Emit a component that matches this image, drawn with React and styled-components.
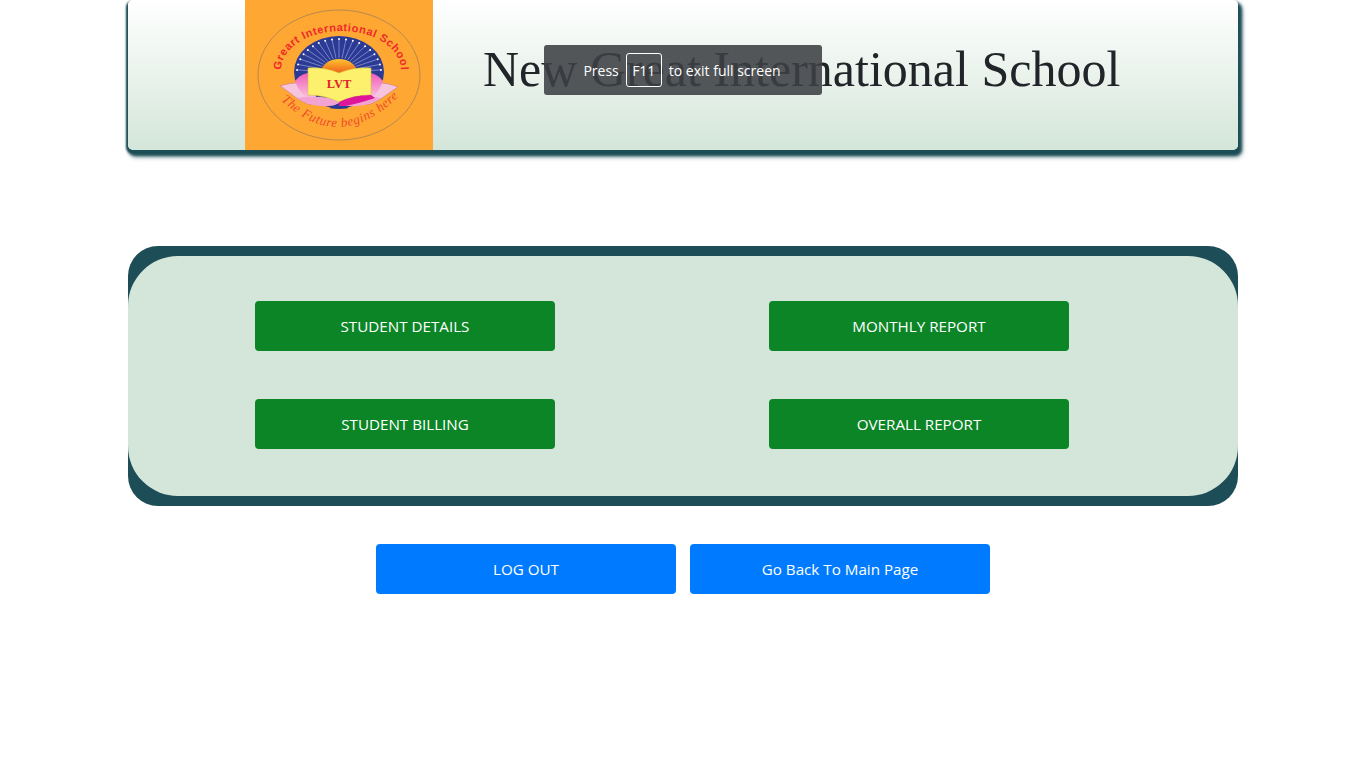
import React from "react";
import styled, { createGlobalStyle } from "styled-components";

const Global = createGlobalStyle`
  html, body { margin: 0; padding: 0; background: #fff; }
  body { font-family: "Open Sans", "Noto Sans", sans-serif; }
`;
const Page = styled.div`
  position: relative;
  width: 1366px;
  height: 768px;
  overflow: hidden;
`;
const Container = styled.div`
  width: 1110px;
  margin: 0 auto;
  display: flex;
  flex-direction: column;
`;
const Header = styled.header`
  display: flex;
  align-items: flex-start;
  height: 150px;
  padding-left: 117px;
  border-radius: 5px;
  background: linear-gradient(to bottom, #ffffff 0%, #d4e6d9 100%);
  box-shadow: 2px 4px 3px 2px #1d4d56, -1px 2px 2px 1px #1d4d56, 3px 6px 5px 1px rgba(29, 77, 86, 0.5);
`;
const Logo = styled.svg`
  flex: none;
  display: block;
  width: 188px;
  height: 150px;
`;
const Title = styled.h1`
  margin: 38px 0 0 50px;
  font-family: "Liberation Serif", "Times New Roman", serif;
  font-size: 50px;
  line-height: 62px;
  font-weight: 400;
  color: #212529;
  white-space: nowrap;
`;
const Panel = styled.section`
  margin-top: 96px;
  padding: 10px 0;
  background: #1d4d56;
  border-radius: 30px;
`;
const PanelInner = styled.div`
  display: grid;
  grid-template-columns: 300px 300px;
  column-gap: 214px;
  row-gap: 48px;
  padding: 45px 0 47px 127px;
  background: #d4e6d9;
  border-radius: 50px;
`;
const Button = styled.button`
  width: 300px;
  height: 50px;
  padding: 0;
  border: 0;
  border-radius: 4px;
  background: ${(p) => p.$bg};
  color: #fff;
  font-family: "Open Sans", "Noto Sans", sans-serif;
  font-size: 15.2px;
  line-height: 50px;
  text-align: center;
`;
const Footer = styled.div`
  display: flex;
  justify-content: center;
  gap: 14px;
  margin-top: 38px;
`;
const Toast = styled.div`
  position: absolute;
  left: 544px;
  top: 45px;
  width: 278px;
  height: 50px;
  padding-right: 2px;
  display: flex;
  align-items: center;
  justify-content: center;
  gap: 7px;
  box-sizing: border-box;
  border-radius: 3px;
  background: rgba(60, 64, 67, 0.88);
  color: #fff;
  font-family: "Open Sans", "Noto Sans", sans-serif;
  font-size: 14px;
`;
const Key = styled.span`
  display: flex;
  align-items: center;
  justify-content: center;
  box-sizing: border-box;
  width: 36px;
  height: 34px;
  border: 1px solid #fff;
  border-radius: 3px;
`;

const LogoArt = () => (
  <Logo viewBox="0 0 188 150" role="img" aria-label="Greart International School logo">
    <defs>
      <linearGradient id="sun" x1="0" y1="0" x2="0" y2="1">
        <stop offset="0" stopColor="#ffc52e" />
        <stop offset="1" stopColor="#f0601c" />
      </linearGradient>
      <linearGradient id="petal" x1="0" y1="0" x2="0" y2="1">
        <stop offset="0" stopColor="#f05cb8" />
        <stop offset="1" stopColor="#fbd3e6" />
      </linearGradient>
      <path id="arcTop" d="M36,70 A60,39 0 0 1 156,70" />
      <path id="arcBottom" d="M36,100 Q94,156 154,96" />
    </defs>
    <rect width="188" height="150" fill="#ffa733" />
    <ellipse cx="94" cy="75" rx="81" ry="65" fill="none" stroke="#b58a4e" strokeWidth="1" />
    <ellipse cx="94" cy="72" rx="45" ry="36" fill="#2b3a94" />
    {Array.from({ length: 19 }).map((_, i) => {
      const a = Math.PI * (1.02 + (i * 0.96) / 18);
      const x = 94 + 42 * Math.cos(a);
      const y = 72 + 33 * Math.sin(a);
      return (
        <g key={i}>
          <line x1={94 + 18 * Math.cos(a)} y1={72 + 14 * Math.sin(a)} x2={x} y2={y} stroke="#aeb6e6" strokeWidth="0.6" />
          <circle cx={x} cy={y} r="1" fill="#fff" />
        </g>
      );
    })}
    <path d="M76,73 A18,14 0 0 1 112,73 Z" fill="url(#sun)" />
    <path d="M35,86 C48,82 56,82 63,86 L66,105 C54,102 45,92 35,86 Z" fill="#f7c4de" stroke="#b55a8c" strokeWidth="0.4" />
    <path d="M153,87 C140,82 132,82 125,86 L122,105 C134,102 143,93 153,87 Z" fill="#f7c4de" stroke="#b55a8c" strokeWidth="0.4" />
    <path d="M50,81 C56,74 60,73 66,73 L72,102 C60,99 54,92 50,81 Z" fill="url(#petal)" />
    <path d="M138,81 C132,74 128,73 122,73 L116,102 C128,99 134,92 138,81 Z" fill="url(#petal)" />
    <path d="M52,98 C66,107 82,108 94,104 C106,108 122,107 136,98 C124,96 106,96 94,100 C82,96 64,96 52,98 Z" fill="#f3a3d2" />
    <path d="M84,108 L94,103 L104,108 Q94,110 84,108 Z" fill="#2b3a94" />
    <path d="M63,68 Q80,67 94,73 Q108,67 126,68 L126,95 Q108,95 94,102 Q80,95 63,95 Z" fill="#fdf06c" stroke="#d8c23a" strokeWidth="0.6" />
    <path d="M94,102 Q108,95 126,95 L130,98 Q112,104 100,106 L94,106 Z" fill="#e0169a" />
    <text x="94" y="88" textAnchor="middle" fontFamily="Liberation Serif, serif" fontWeight="700" fontSize="12.5" fill="#e3202a">LVT</text>
    <text fontFamily="Liberation Sans, sans-serif" fontWeight="700" fontSize="11" fill="#ee2a2a">
      <textPath href="#arcTop" textLength="157" lengthAdjust="spacing">Greart International School</textPath>
    </text>
    <text fontFamily="Liberation Serif, serif" fontStyle="italic" fontSize="13" fill="#ef4a2a">
      <textPath href="#arcBottom" textLength="134" lengthAdjust="spacing">The Future begins here</textPath>
    </text>
  </Logo>
);

export default function App() {
  return (
    <Page>
      <Global />
      <Container>
        <Header>
          <LogoArt />
          <Title>New Great International School</Title>
        </Header>
        <Panel>
          <PanelInner>
            <Button $bg="#0c8527">STUDENT DETAILS</Button>
            <Button $bg="#0c8527">MONTHLY REPORT</Button>
            <Button $bg="#0c8527">STUDENT BILLING</Button>
            <Button $bg="#0c8527">OVERALL REPORT</Button>
          </PanelInner>
        </Panel>
        <Footer>
          <Button $bg="#007bff">LOG OUT</Button>
          <Button $bg="#007bff">Go Back To Main Page</Button>
        </Footer>
      </Container>
      <Toast>
        <span>Press</span>
        <Key>F11</Key>
        <span>to exit full screen</span>
      </Toast>
    </Page>
  );
}
